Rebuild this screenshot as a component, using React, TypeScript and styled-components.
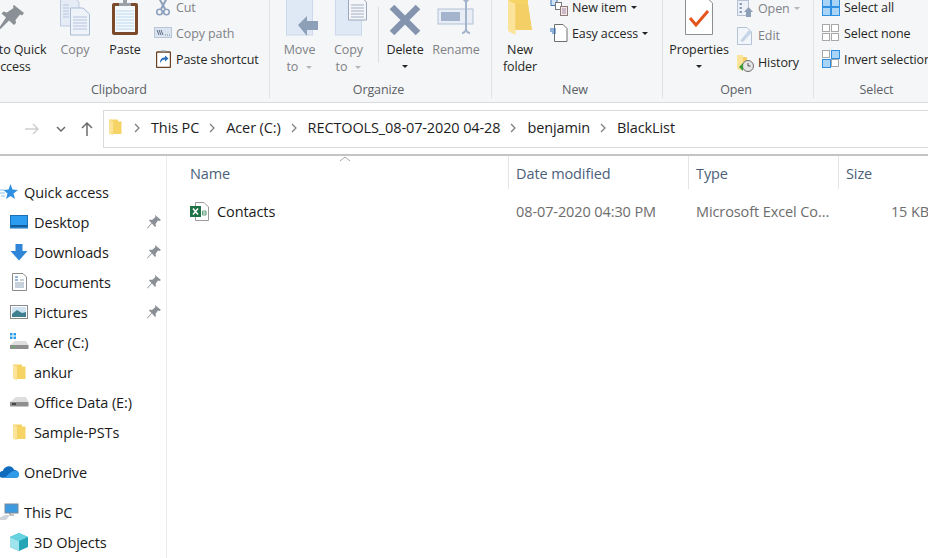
import { Fragment } from "react";
import styled, { createGlobalStyle } from "styled-components";

const GlobalStyle = createGlobalStyle`
  html, body {
    margin: 0;
    padding: 0;
    width: 928px;
    height: 558px;
    overflow: hidden;
    background: #fff;
    font-family: "Open Sans", "Noto Sans", "Liberation Sans", sans-serif;
  }
`;

const Page = styled.div`
  width: 928px;
  height: 558px;
  display: flex;
  flex-direction: column;
  overflow: hidden;
`;

/* ---------- ribbon ---------- */

const Ribbon = styled.div`
  height: 102px;
  flex: none;
  display: flex;
  background: #f5f6f7;
  border-bottom: 1px solid #dadbdc;
  overflow: hidden;
  font-size: 12.5px;
  letter-spacing: -0.1px;
  color: #262626;
`;

const Group = styled.div<{ $width: number; $shift?: number }>`
  flex: none;
  width: ${(p) => p.$width}px;
  margin-left: ${(p) => p.$shift ?? 0}px;
  height: 98px;
  display: flex;
  flex-direction: column;
  border-right: 1px solid #e1e2e3;
  box-sizing: border-box;
`;

const GroupBody = styled.div<{ $pad?: number }>`
  height: 81px;
  display: flex;
  padding-left: ${(p) => p.$pad ?? 0}px;
`;

const GroupLabel = styled.div<{ $right?: number }>`
  height: 17px;
  line-height: 17px;
  text-align: center;
  color: #5b5f66;
  padding-right: ${(p) => p.$right ?? 4}px;
`;

const BigButton = styled.div<{ $width: number; $dim?: boolean }>`
  flex: none;
  width: ${(p) => p.$width}px;
  display: flex;
  flex-direction: column;
  align-items: center;
  color: ${(p) => (p.$dim ? "#7f8287" : "#262626")};
`;

const BigIcon = styled.div<{ $nudge?: number }>`
  height: 36px;
  margin-bottom: 5px;
  padding-left: ${(p) => p.$nudge ?? 0}px;
  display: flex;
  align-items: flex-end;
  justify-content: center;
`;

const BigLabel = styled.div`
  line-height: 17px;
  text-align: center;
  white-space: nowrap;
`;

const Caret = styled.span<{ $dim?: boolean }>`
  display: inline-block;
  width: 0;
  height: 0;
  margin-left: 5px;
  vertical-align: 2px;
  border-left: 3.5px solid transparent;
  border-right: 3.5px solid transparent;
  border-top: 3.5px solid ${(p) => (p.$dim ? "#b4b6b9" : "#222")};
`;

const CaretLine = styled(Caret)`
  margin-left: 0;
  vertical-align: 3px;
`;

const RowCaret = styled(Caret)`
  margin-left: 0;
  vertical-align: 0;
`;

const SmallList = styled.div<{ $step: number; $top: number; $left: number }>`
  display: flex;
  flex-direction: column;
  margin-top: ${(p) => p.$top}px;
  margin-left: ${(p) => p.$left}px;
  & > div {
    height: ${(p) => p.$step}px;
  }
`;

const SmallRow = styled.div<{ $dim?: boolean }>`
  display: flex;
  align-items: center;
  gap: 4px;
  white-space: nowrap;
  color: ${(p) => (p.$dim ? "#7f8287" : "#262626")};
`;

const SmallIcon = styled.div`
  width: 18px;
  height: 18px;
  flex: none;
  display: flex;
  align-items: center;
  justify-content: center;
`;

const VRule = styled.div`
  width: 1px;
  height: 56px;
  margin: 7px 0 0 5px;
  background: #dcdde0;
  flex: none;
`;

/* ---------- address row ---------- */

const AddressRow = styled.div`
  height: 53px;
  flex: none;
  display: flex;
  align-items: center;
  border-bottom: 2px solid #c4c4c4;
  box-sizing: border-box;
`;

const NavButtons = styled.div`
  width: 103px;
  flex: none;
  display: grid;
  grid-template-columns: 26px 32px 20px;
  align-items: center;
  justify-items: center;
  padding-left: 19px;
  box-sizing: border-box;
`;

const AddressBox = styled.div`
  flex: 1;
  height: 38px;
  margin-right: -4px;
  display: flex;
  align-items: center;
  border: 1px solid #dadada;
  box-sizing: border-box;
  padding: 0 0 2px 5px;
  font-size: 14.5px;
  letter-spacing: -0.12px;
  color: #1e1e1e;
`;

const AddressFolder = styled.span`
  display: flex;
  margin-right: 2px;
`;

const Crumb = styled.span`
  white-space: nowrap;
`;

const CrumbSep = styled.svg`
  width: 27px;
  height: 12px;
  flex: none;
`;

/* ---------- content ---------- */

const Content = styled.div`
  flex: 1;
  display: flex;
  min-height: 0;
`;

const Sidebar = styled.nav`
  width: 167px;
  flex: none;
  box-sizing: border-box;
  padding-top: 21px;
  border-right: 1px solid #ececec;
  overflow: hidden;
  font-size: 14.5px;
  letter-spacing: -0.1px;
  color: #1a1a1a;
`;

const NavRow = styled.div<{ $indent: number; $gap?: number }>`
  height: 30px;
  display: flex;
  align-items: center;
  margin-left: ${(p) => p.$indent}px;
  margin-top: ${(p) => p.$gap ?? 0}px;
  white-space: nowrap;
`;

const NavIcon = styled.div`
  width: 20px;
  height: 20px;
  flex: none;
  margin-right: 5px;
  display: flex;
  align-items: center;
  justify-content: center;
`;

const NavText = styled.span`
  flex: 1;
`;

const PinSlot = styled.div`
  width: 14px;
  margin-right: 5px;
  display: flex;
`;

const Files = styled.main`
  flex: 1;
  position: relative;
  min-width: 0;
  overflow: hidden;
  padding-left: 15px;
  font-size: 14.5px;
  letter-spacing: -0.1px;
`;

const SortMark = styled.svg`
  position: absolute;
  left: 172px;
  top: 0;
  width: 12px;
  height: 6px;
`;

const Columns = styled.div`
  display: grid;
  grid-template-columns: 326px 180px 150px 91px;
`;

const HeadCell = styled.div<{ $line?: boolean }>`
  height: 33px;
  line-height: 36px;
  padding-left: ${(p) => (p.$line ? 7 : 8)}px;
  border-left: ${(p) => (p.$line ? "1px solid #e5e5e5" : "none")};
  color: #4c607a;
`;

const Cell = styled.div<{ $right?: boolean; $main?: boolean }>`
  height: 44px;
  display: flex;
  align-items: center;
  justify-content: ${(p) => (p.$right ? "flex-end" : "flex-start")};
  padding-left: 8px;
  color: ${(p) => (p.$main ? "#1a1a1a" : "#6d6d6d")};
  white-space: nowrap;
  gap: 7px;
`;

/* ---------- drawings ---------- */

const PinBig = () => (
  <svg width="26" height="36" viewBox="0 0 26 36">
    <path d="M15 5L25 13L23 15.500L21 14.500L16.500 20L17 23L15 25L10 20.500L1.500 29L0 28L7 17.500L2.500 13.500L4.500 11.500L8 12.500L14.500 8L14 6Z" fill="#8b9096" />
  </svg>
);

const CopyBig = () => (
  <svg width="32" height="36" viewBox="0 0 32 36">
    <path d="M1.500 -4H14L20 2V26H1.500Z" fill="#e6ecf6" stroke="#bcc9de" />
    <path d="M11.500 8H24L30.500 14V35H11.500Z" fill="#eef2f9" stroke="#a9bbd6" />
    <path d="M14 17H28M14 20H28M14 23H28M14 26H28M14 29H28M4 5H10M4 8H10M4 11H10M4 14H10M4 17H10" stroke="#b4c4dd" />
  </svg>
);

const PasteBig = () => (
  <svg width="28" height="36" viewBox="0 0 28 36">
    <rect x="1" y="3" width="26" height="32" rx="2" fill="#7a4a2a" />
    <rect x="4" y="6" width="20" height="26" fill="#f4f9fd" />
    <path d="M5 11H23M5 14H23M5 17H23M5 20H23M5 23H23M5 26H23M5 29H23" stroke="#bcd8ee" />
    <path d="M8 6V3H12V0H16V3H20V6Z" fill="#9aa0a5" />
  </svg>
);

const Scissors = () => (
  <svg width="14" height="18" viewBox="0 0 14 18">
    <path d="M3 0L9 11M11 0L5 11" stroke="#8ca0bd" strokeWidth="2" fill="none" />
    <circle cx="3.500" cy="14" r="2.800" fill="none" stroke="#8ca0bd" strokeWidth="1.600" />
    <circle cx="10.500" cy="14" r="2.800" fill="none" stroke="#8ca0bd" strokeWidth="1.600" />
  </svg>
);

const CopyPathIcon = () => (
  <svg width="18" height="12" viewBox="0 0 18 12">
    <rect x="0.500" y="0.500" width="17" height="10" fill="#dce4f0" stroke="#b8c6da" />
    <path d="M3 3L5 8M5 3L7 8M7 3L9 8" stroke="#5d6f8a" fill="none" />
    <path d="M11 8H12M13 8H14M15 8H16" stroke="#7a8aa3" />
  </svg>
);

const PasteShortcutIcon = () => (
  <svg width="15" height="18" viewBox="0 0 15 18">
    <rect x="0.500" y="2" width="14" height="15.500" rx="1" fill="#fff" stroke="#6b4226" strokeWidth="1.400" />
    <path d="M5 2V0.500H10V2Z" fill="#8f9498" />
    <path d="M4 13C4 9 6 7.500 9 7.500V5.500L12.500 8.500L9 11.500V9.500C7 9.500 5.500 10.500 4 13Z" fill="#2b6cb8" />
  </svg>
);

const MoveToIcon = () => (
  <svg width="33" height="36" viewBox="0 0 33 36">
    <rect x="0.500" y="-6" width="26" height="41" fill="#dfe8f5" stroke="#cdd9ea" />
    <path d="M12 25L21 16V21H32V30H21V36Z" fill="#8ea0b8" />
  </svg>
);

const CopyToIcon = () => (
  <svg width="33" height="36" viewBox="0 0 33 36">
    <rect x="0.500" y="-6" width="26" height="41" fill="#dfe8f5" stroke="#cdd9ea" />
    <path d="M13.500 -4H25L31.500 2V20H13.500Z" fill="#f4f6fa" stroke="#9aa8bd" />
    <path d="M16 5H29M16 8H29M16 11H29M16 14H29M16 17H29" stroke="#a3b0c4" />
  </svg>
);

const DeleteIcon = () => (
  <svg width="32" height="32" viewBox="0 0 32 32">
    <path d="M3 3L29 29M29 3L3 29" stroke="#8494af" strokeWidth="6.500" fill="none" />
  </svg>
);

const RenameIcon = () => (
  <svg width="38" height="36" viewBox="0 0 38 36">
    <rect x="1" y="9" width="35" height="15" fill="#e9eef6" stroke="#b2c1d7" />
    <rect x="4" y="12" width="19" height="9" fill="#a4b4cc" />
    <path d="M29 2V31M25 -1C27 -1 29 1 29 3C29 1 31 -1 33 -1M25 33C27 33 29 31 29 29C29 31 31 33 33 33" stroke="#a4b4cc" strokeWidth="2" fill="none" />
  </svg>
);

const FolderBig = () => (
  <svg width="26" height="36" viewBox="0 0 26 36">
    <path d="M1 0H21V4L24.500 30H7Z" fill="#f6d365" />
    <path d="M1 0L8.500 4V35L1 31Z" fill="#fbe39a" />
    <path d="M8.500 4H21L25 30H8.500Z" fill="#f4cf66" />
  </svg>
);

const NewItemIcon = () => (
  <svg width="18" height="17" viewBox="0 0 18 17">
    <rect x="1" y="0.500" width="6" height="6" fill="#cfe2f6" stroke="#3f74b5" />
    <rect x="5.500" y="3.500" width="6" height="7" fill="#fff" stroke="#777" />
    <rect x="10.500" y="7.500" width="7" height="9" fill="#f7e4e4" stroke="#8c7b7b" />
    <path d="M12 10H16M12 12H16M12 14H16" stroke="#9a8fb0" />
  </svg>
);

const EasyAccessIcon = () => (
  <svg width="18" height="18" viewBox="0 0 18 18">
    <path d="M4.500 0.500H13L17 4.500V17.500H4.500Z" fill="#fff" stroke="#6e6e6e" />
    <path d="M0 7H6M2 9H6M0 5H6" stroke="#2b6cb8" />
  </svg>
);

const PropertiesIcon = () => (
  <svg width="28" height="36" viewBox="0 0 28 36">
    <path d="M0.500 -3H21L27.500 3V34.500H0.500Z" fill="#fff" stroke="#8e8e8e" />
    <path d="M5 18L11 25L23 11" stroke="#e5541b" strokeWidth="3" fill="none" />
  </svg>
);

const OpenIcon = () => (
  <svg width="16" height="18" viewBox="0 0 16 18">
    <rect x="0.500" y="0.500" width="11" height="15" fill="#eef2f8" stroke="#b4c2d6" />
    <path d="M2.500 3H5V5H2.500ZM2.500 7H5V9H2.500ZM2.500 11H5V13H2.500Z" fill="#8ea0b8" />
    <path d="M11.500 7L16 12H14V17H9V12H7Z" fill="#8ea0b8" />
  </svg>
);

const EditIcon = () => (
  <svg width="16" height="18" viewBox="0 0 16 18">
    <path d="M0.500 0.500H10L14.500 5V17.500H0.500Z" fill="#f2f5fa" stroke="#b4c2d6" />
    <path d="M3 14L12 3L15 5L6 15Z" fill="#c6d4e7" />
  </svg>
);

const HistoryIcon = () => (
  <svg width="18" height="18" viewBox="0 0 18 18">
    <path d="M1 1H7V5V17L1 15Z" fill="#fbe39a" />
    <path d="M7 3H11V9H7Z" fill="#f4cf66" />
    <circle cx="12" cy="12" r="5.500" fill="#e5e5e5" stroke="#6e6e6e" />
    <path d="M12 9V12H14.500" stroke="#555" fill="none" />
    <path d="M3 13L7 9V17Z" fill="#3c9a3c" />
  </svg>
);

const SelectGrid = ({ filled }: { filled: number[] }) => (
  <svg width="18" height="18" viewBox="0 0 18 18">
    {[0, 1, 2, 3].map((i) => {
      const on = filled.includes(i);
      return (
        <rect
          key={i}
          x={(i % 2) * 9 + 0.5}
          y={Math.floor(i / 2) * 9 + 0.5}
          width={on ? 8 : 7}
          height={on ? 8 : 7}
          fill={on ? "#a9d4f7" : "#fff"}
          stroke={on ? "#2f8fe0" : "#a8a8a8"}
        />
      );
    })}
  </svg>
);

const FolderSmall = () => (
  <svg width="13" height="17" viewBox="0 0 13 17">
    <path d="M0 0.500H9V2.500H12.500V15H4Z" fill="#f6d365" />
    <path d="M0 0.500L4 2.500V16.500L0 14.500Z" fill="#fbe39a" />
  </svg>
);

const ForwardArrow = () => (
  <svg width="16" height="16" viewBox="0 0 16 16">
    <path d="M1 8H14M9 3L14 8L9 13" stroke="#d0d0d0" strokeWidth="1.500" fill="none" />
  </svg>
);

const UpArrow = () => (
  <svg width="16" height="16" viewBox="0 0 16 16">
    <path d="M8 15V2M3 7L8 2L13 7" stroke="#6c6c6c" strokeWidth="1.500" fill="none" />
  </svg>
);

const DownChevron = () => (
  <svg width="10" height="6" viewBox="0 0 10 6">
    <path d="M1 1L5 5L9 1" stroke="#6c6c6c" strokeWidth="1.500" fill="none" />
  </svg>
);

const Separator = () => (
  <CrumbSep viewBox="0 0 27 12">
    <path d="M11 2L15 6L11 10" stroke="#7c7c7c" strokeWidth="1.200" fill="none" />
  </CrumbSep>
);

const StarIcon = () => (
  <svg width="18" height="18" viewBox="0 0 18 18">
    <path d="M10.500 1L12.500 6.500L18 7L13.500 10.500L15 16L10.500 13L6 16L7.500 10.500L3.500 7L8.500 6.500Z" fill="#2f8fe0" />
    <path d="M0 7H4M0 10H5M1 13H5" stroke="#8cc4f0" />
  </svg>
);

const DesktopIcon = () => (
  <svg width="18" height="14" viewBox="0 0 18 14">
    <rect x="0.500" y="0.500" width="17" height="12.500" fill="#2b9cf0" stroke="#1d6fb5" />
    <path d="M1 11H17" stroke="#125c9c" strokeWidth="2" />
  </svg>
);

const DownloadsIcon = () => (
  <svg width="18" height="17" viewBox="0 0 18 17">
    <path d="M5.500 0H12.500V7H17.500L9 16.500L0.500 7H5.500Z" fill="#2f86d8" />
  </svg>
);

const DocumentsIcon = () => (
  <svg width="15" height="18" viewBox="0 0 15 18">
    <path d="M0.500 0.500H11L14.500 4V17.500H0.500Z" fill="#fff" stroke="#8a8a8a" />
    <path d="M3 4H6M3 7H6" stroke="#2b6cb8" />
    <path d="M3 10H12M3 12H12M3 14H12M8 7H12" stroke="#8fa3b8" />
  </svg>
);

const PicturesIcon = () => (
  <svg width="18" height="14" viewBox="0 0 18 14">
    <rect x="0.500" y="0.500" width="17" height="13" fill="#fff" stroke="#8a8a8a" />
    <rect x="2" y="2" width="14" height="10" fill="#cfe3f2" />
    <path d="M2 9L7 5L12 8L16 7V12H2Z" fill="#3f7f8f" />
  </svg>
);

const DriveCIcon = () => (
  <svg width="20" height="18" viewBox="0 0 20 18">
    <path d="M1 0H3.500V2.500H1ZM4.500 0H7V2.500H4.500ZM1 3.500H3.500V6H1ZM4.500 3.500H7V6H4.500Z" fill="#2f9be8" />
    <path d="M1 12L6 8H17L19.500 12Z" fill="#dedede" />
    <rect x="1" y="12" width="18.500" height="4" fill="#8e8e8e" />
    <path d="M3 14H6" stroke="#48c048" />
  </svg>
);

const DriveEIcon = () => (
  <svg width="20" height="12" viewBox="0 0 20 12">
    <path d="M1 6L7 1H17L19.500 6Z" fill="#dedede" />
    <rect x="1" y="6" width="18.500" height="4.500" fill="#8e8e8e" />
    <path d="M3 8H7" stroke="#2e2e2e" strokeWidth="1.500" />
  </svg>
);

const CloudIcon = () => (
  <svg width="21" height="14" viewBox="0 0 21 14">
    <path d="M4 13C1 13 0 11 0 9.500C0 7.500 2 6 4 6C5 2.500 8 1 10.500 1C13 1 15 2.500 16 5C19 5 21 7.500 21 9.500C21 11.500 19.500 13 18 13Z" fill="#0f6cbd" />
    <path d="M6 13L12 7.500C14 6 16 5.500 18 6C20 7 21 8.500 21 9.500C21 11.500 19.500 13 18 13Z" fill="#2f9be8" />
  </svg>
);

const ThisPcIcon = () => (
  <svg width="20" height="18" viewBox="0 0 20 18">
    <rect x="6" y="1" width="13" height="9" fill="#3c9be0" stroke="#7a8a99" />
    <path d="M11 10V12H15" stroke="#8a8a8a" fill="none" />
    <path d="M0 15L6 12H11L7 17H1Z" fill="#cfd3d8" />
  </svg>
);

const CubeIcon = () => (
  <svg width="18" height="18" viewBox="0 0 18 18">
    <path d="M9 0L18 4V14L9 18L0 14V4Z" fill="#23a5b5" />
    <path d="M0 4L9 8V18L0 14Z" fill="#9fe3ec" />
    <path d="M0 4L9 0L18 4L9 8Z" fill="#68d3e0" />
  </svg>
);

const PinSmall = () => (
  <svg width="14" height="14" viewBox="0 0 14 14">
    <path d="M8 0L14 5L12.500 6L11 5.500L8.500 9L9 11L8 12L5 8.500L0.500 13.500L0 13L4.500 8L2 5.500L3 4.500L5 5L8.500 2L8 1Z" fill="#8b9096" />
  </svg>
);

const ExcelIcon = () => (
  <svg width="20" height="19" viewBox="0 0 20 19">
    <path d="M5.500 0.500H14L18.500 5V18.500H5.500Z" fill="#fff" stroke="#9a9a9a" />
    <rect x="0" y="4" width="11" height="11" fill="#1e7145" />
    <path d="M3 6.500L8 12.500M8 6.500L3 12.500" stroke="#fff" strokeWidth="1.500" />
    <path d="M12.500 9H16V13H12.500ZM12.500 11H16" stroke="#5a9e78" fill="none" />
  </svg>
);

const navItems = [
  { icon: <StarIcon />, label: "Quick access", indent: -1 },
  { icon: <DesktopIcon />, label: "Desktop", indent: 9, pin: true },
  { icon: <DownloadsIcon />, label: "Downloads", indent: 9, pin: true },
  { icon: <DocumentsIcon />, label: "Documents", indent: 9, pin: true },
  { icon: <PicturesIcon />, label: "Pictures", indent: 9, pin: true },
  { icon: <DriveCIcon />, label: "Acer (C:)", indent: 9 },
  { icon: <FolderSmall />, label: "ankur", indent: 9 },
  { icon: <DriveEIcon />, label: "Office Data (E:)", indent: 9 },
  { icon: <FolderSmall />, label: "Sample-PSTs", indent: 9 },
  { icon: <CloudIcon />, label: "OneDrive", indent: -1, gap: 10 },
  { icon: <ThisPcIcon />, label: "This PC", indent: -1, gap: 10 },
  { icon: <CubeIcon />, label: "3D Objects", indent: 9 },
];

const crumbs = ["This PC", "Acer (C:)", "RECTOOLS_08-07-2020 04-28", "benjamin", "BlackList"];

export default function App() {
  return (
    <Page>
      <GlobalStyle />
      <Ribbon>
        <Group $width={294} $shift={-24}>
          <GroupBody>
            <BigButton $width={72}>
              <BigIcon><PinBig /></BigIcon>
              <BigLabel>Pin to Quick<br />access</BigLabel>
            </BigButton>
            <BigButton $width={54} $dim>
              <BigIcon><CopyBig /></BigIcon>
              <BigLabel>Copy</BigLabel>
            </BigButton>
            <BigButton $width={46}>
              <BigIcon><PasteBig /></BigIcon>
              <BigLabel>Paste</BigLabel>
            </BigButton>
            <SmallList $step={26} $top={-6} $left={6}>
              <SmallRow $dim><SmallIcon><Scissors /></SmallIcon>Cut</SmallRow>
              <SmallRow $dim><SmallIcon><CopyPathIcon /></SmallIcon>Copy path</SmallRow>
              <SmallRow><SmallIcon><PasteShortcutIcon /></SmallIcon>Paste shortcut</SmallRow>
            </SmallList>
          </GroupBody>
          <GroupLabel $right={7}>Clipboard</GroupLabel>
        </Group>

        <Group $width={222}>
          <GroupBody $pad={5}>
            <BigButton $width={49} $dim>
              <BigIcon $nudge={6}><MoveToIcon /></BigIcon>
              <BigLabel>Move<br />to <Caret $dim /></BigLabel>
            </BigButton>
            <BigButton $width={49} $dim>
              <BigIcon $nudge={6}><CopyToIcon /></BigIcon>
              <BigLabel>Copy<br />to <Caret $dim /></BigLabel>
            </BigButton>
            <VRule />
            <BigButton $width={52}>
              <BigIcon><DeleteIcon /></BigIcon>
              <BigLabel>Delete<br /><CaretLine /></BigLabel>
            </BigButton>
            <BigButton $width={50} $dim>
              <BigIcon><RenameIcon /></BigIcon>
              <BigLabel>Rename</BigLabel>
            </BigButton>
          </GroupBody>
          <GroupLabel>Organize</GroupLabel>
        </Group>

        <Group $width={171}>
          <GroupBody $pad={4}>
            <BigButton $width={48}>
              <BigIcon><FolderBig /></BigIcon>
              <BigLabel>New<br />folder</BigLabel>
            </BigButton>
            <SmallList $step={26} $top={-6} $left={6}>
              <SmallRow><SmallIcon><NewItemIcon /></SmallIcon>New item<RowCaret /></SmallRow>
              <SmallRow><SmallIcon><EasyAccessIcon /></SmallIcon>Easy access<RowCaret /></SmallRow>
            </SmallList>
          </GroupBody>
          <GroupLabel>New</GroupLabel>
        </Group>

        <Group $width={151}>
          <GroupBody $pad={5}>
            <BigButton $width={62}>
              <BigIcon><PropertiesIcon /></BigIcon>
              <BigLabel>Properties<br /><CaretLine /></BigLabel>
            </BigButton>
            <SmallList $step={27} $top={-5} $left={6}>
              <SmallRow $dim><SmallIcon><OpenIcon /></SmallIcon>Open<RowCaret $dim /></SmallRow>
              <SmallRow $dim><SmallIcon><EditIcon /></SmallIcon>Edit</SmallRow>
              <SmallRow><SmallIcon><HistoryIcon /></SmallIcon>History</SmallRow>
            </SmallList>
          </GroupBody>
          <GroupLabel>Open</GroupLabel>
        </Group>

        <Group $width={126}>
          <GroupBody $pad={8}>
            <SmallList $step={26} $top={-6} $left={0}>
              <SmallRow><SmallIcon><SelectGrid filled={[0, 1, 2, 3]} /></SmallIcon>Select all</SmallRow>
              <SmallRow><SmallIcon><SelectGrid filled={[]} /></SmallIcon>Select none</SmallRow>
              <SmallRow><SmallIcon><SelectGrid filled={[1, 2]} /></SmallIcon>Invert selection</SmallRow>
            </SmallList>
          </GroupBody>
          <GroupLabel $right={0}>Select</GroupLabel>
        </Group>
      </Ribbon>

      <AddressRow>
        <NavButtons>
          <ForwardArrow />
          <DownChevron />
          <UpArrow />
        </NavButtons>
        <AddressBox>
          <AddressFolder><FolderSmall /></AddressFolder>
          <Separator />
          {crumbs.map((c, i) => (
            <Fragment key={c}>
              <Crumb>{c}</Crumb>
              {i < crumbs.length - 1 && <Separator />}
            </Fragment>
          ))}
        </AddressBox>
      </AddressRow>

      <Content>
        <Sidebar>
          {navItems.map((n) => (
            <NavRow key={n.label} $indent={n.indent} $gap={n.gap}>
              <NavIcon>{n.icon}</NavIcon>
              <NavText>{n.label}</NavText>
              {n.pin && <PinSlot><PinSmall /></PinSlot>}
            </NavRow>
          ))}
        </Sidebar>
        <Files>
          <SortMark viewBox="0 0 12 6">
            <path d="M1 5L6 1L11 5" stroke="#a8a8a8" fill="none" />
          </SortMark>
          <Columns>
            <HeadCell>Name</HeadCell>
            <HeadCell $line>Date modified</HeadCell>
            <HeadCell $line>Type</HeadCell>
            <HeadCell $line>Size</HeadCell>
            <Cell $main><ExcelIcon />Contacts</Cell>
            <Cell>08-07-2020 04:30 PM</Cell>
            <Cell>Microsoft Excel Co...</Cell>
            <Cell $right>15 KB</Cell>
          </Columns>
        </Files>
      </Content>
    </Page>
  );
}
